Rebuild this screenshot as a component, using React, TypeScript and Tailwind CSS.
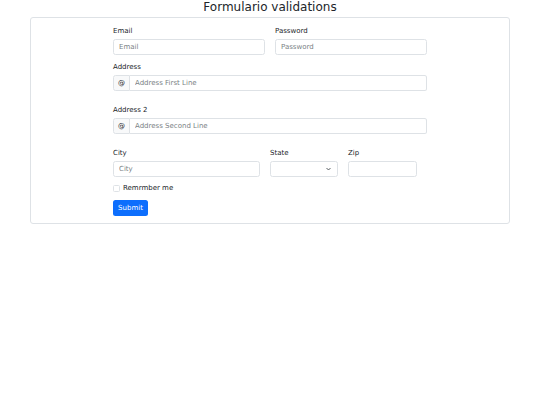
export default function App() {
  const label = "block h-[10px] text-[7px] leading-[10px] text-[#212529] mb-[3px]";
  const input =
    "block h-[16px] w-full rounded-[2.5px] border border-[#dee2e6] bg-white px-[5px] text-[7px] text-[#212529] placeholder-[#7a7f85] outline-none";

  return (
    <div className="min-h-[405px] bg-white font-['DejaVu_Sans',sans-serif] text-[#212529]">
      <h3 className="h-[17px] text-center text-[12px] leading-[15px]">Formulario validations</h3>
      <div className="mx-[30px] rounded-[3px] border border-[#dee2e6] pb-[6px] pt-[8px]">
        <form className="mx-auto w-[314px]" onSubmit={(e) => e.preventDefault()}>
          <div className="flex gap-[10px]">
            <div className="flex-1">
              <label className={label}>Email</label>
              <input className={input} placeholder="Email" />
            </div>
            <div className="flex-1">
              <label className={label}>Password</label>
              <input className={input} type="password" placeholder="Password" />
            </div>
          </div>

          <div className="mt-[7px]">
            <label className={label}>Address</label>
            <div className="flex h-[16px]">
              <span className="flex w-[17px] items-center justify-center rounded-l-[2.5px] border border-[#dee2e6] bg-[#f8f9fa] text-[7px]">
                @
              </span>
              <input
                className="h-[16px] flex-1 rounded-r-[2.5px] border border-l-0 border-[#dee2e6] px-[5px] text-[7px] placeholder-[#7a7f85] outline-none"
                placeholder="Address First Line"
              />
            </div>
          </div>

          <div className="mt-[14px]">
            <label className={label}>Address 2</label>
            <div className="flex h-[16px]">
              <span className="flex w-[17px] items-center justify-center rounded-l-[2.5px] border border-[#dee2e6] bg-[#f8f9fa] text-[7px]">
                @
              </span>
              <input
                className="h-[16px] flex-1 rounded-r-[2.5px] border border-l-0 border-[#dee2e6] px-[5px] text-[7px] placeholder-[#7a7f85] outline-none"
                placeholder="Address Second Line"
              />
            </div>
          </div>

          <div className="mt-[14px] flex gap-[10px]">
            <div className="w-[147px]">
              <label className={label}>City</label>
              <input className={input} placeholder="City" />
            </div>
            <div className="w-[68px]">
              <label className={label}>State</label>
              <div className="relative h-[16px] rounded-[2.5px] border border-[#dee2e6]">
                <svg
                  className="absolute right-[6px] top-[5px]"
                  width="5"
                  height="4"
                  viewBox="0 0 10 8"
                  fill="none"
                  stroke="#343a40"
                  strokeWidth="1.6"
                >
                  <path d="M1 2l4 4 4-4" />
                </svg>
              </div>
            </div>
            <div className="w-[69px]">
              <label className={label}>Zip</label>
              <input className={input} />
            </div>
          </div>

          <div className="mt-[6px] flex h-[10px] items-center gap-[3px]">
            <span className="h-[7px] w-[7px] rounded-[1.5px] border border-[#dee2e6] bg-white" />
            <span className="text-[7px] leading-[10px]">Remrmber me</span>
          </div>

          <button
            type="submit"
            className="mt-[7px] h-[16px] w-[35px] rounded-[2.5px] bg-[#0d6efd] text-[7px] leading-[16px] text-white"
          >
            Submit
          </button>
        </form>
      </div>
    </div>
  );
}
